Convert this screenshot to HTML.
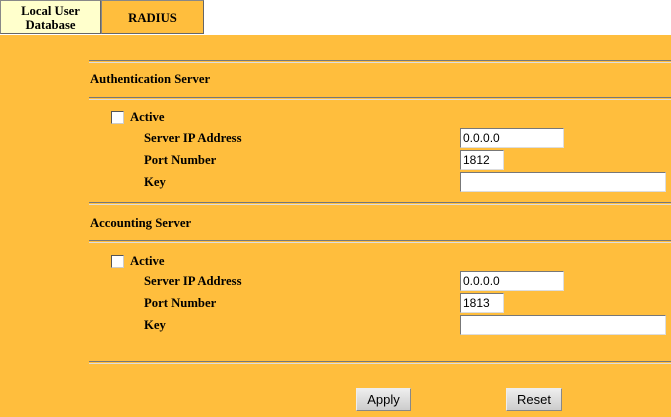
<!DOCTYPE html>
<html><head><style>
body{margin:0;width:671px;height:417px;background:#fff;position:relative;overflow:hidden;font-family:"Liberation Serif",serif;font-size:12.7px;font-weight:bold;color:#000}
.a{position:absolute}
.bg{left:0;top:35px;width:671px;height:382px;background:#FFBE3D}
.tab{top:0;height:32px;border:1px solid #888;border-right-color:#666;border-bottom-color:#666;text-align:center;line-height:14px}
.hr{left:89px;width:582px;height:1px;border-top:1px solid #777;border-bottom:1px solid #ddd}
.in{background:#fff;border:1px solid;border-color:#777 #ddd #ddd #777;height:17px;font:12px "Liberation Sans",sans-serif;font-weight:normal;line-height:17px;padding-left:2px;box-sizing:border-box}
.cb{width:13px;height:13px;background:#fff;border:1px solid;border-color:#555 #ccc #ccc #555;box-sizing:border-box}
.btn{height:23px;background:linear-gradient(#eee,#ccc);border:1px solid;border-color:#eee #888 #888 #eee;box-sizing:border-box;font:13px "Liberation Sans",sans-serif;text-align:center;line-height:21px}
</style></head><body>
<div class="a bg"></div>
<div class="a tab" style="left:0;width:99px;background:#FFFFCC;padding-top:3px;height:29px">Local User<br>Database</div>
<div class="a tab" style="left:101px;width:101px;background:#FFBE3D;line-height:34px">RADIUS</div>
<div class="a hr" style="top:60px"></div>
<div class="a" style="left:90px;top:72px">Authentication Server</div>
<div class="a hr" style="top:97px"></div>
<div class="a cb" style="left:111px;top:111px"></div>
<div class="a" style="left:130px;top:110px">Active</div>
<div class="a" style="left:144px;top:131px">Server IP Address</div>
<div class="a" style="left:144px;top:153px">Port Number</div>
<div class="a" style="left:144px;top:175px">Key</div>
<div class="a in" style="left:460px;top:128px;width:104px;height:20px;line-height:18px">0.0.0.0</div>
<div class="a in" style="left:460px;top:150px;width:44px;height:20px;line-height:18px">1812</div>
<div class="a in" style="left:460px;top:172px;width:206px;height:20px"></div>
<div class="a hr" style="top:202px"></div>
<div class="a" style="left:90px;top:216px">Accounting Server</div>
<div class="a hr" style="top:240px"></div>
<div class="a cb" style="left:111px;top:255px"></div>
<div class="a" style="left:130px;top:254px">Active</div>
<div class="a" style="left:144px;top:274px">Server IP Address</div>
<div class="a" style="left:144px;top:296px">Port Number</div>
<div class="a" style="left:144px;top:318px">Key</div>
<div class="a in" style="left:460px;top:271px;width:104px;height:20px;line-height:18px">0.0.0.0</div>
<div class="a in" style="left:460px;top:293px;width:44px;height:20px;line-height:18px">1813</div>
<div class="a in" style="left:460px;top:315px;width:206px;height:20px"></div>
<div class="a hr" style="top:361px"></div>
<div class="a btn" style="left:356px;top:388px;width:55px">Apply</div>
<div class="a btn" style="left:506px;top:388px;width:56px">Reset</div>
</body></html>
